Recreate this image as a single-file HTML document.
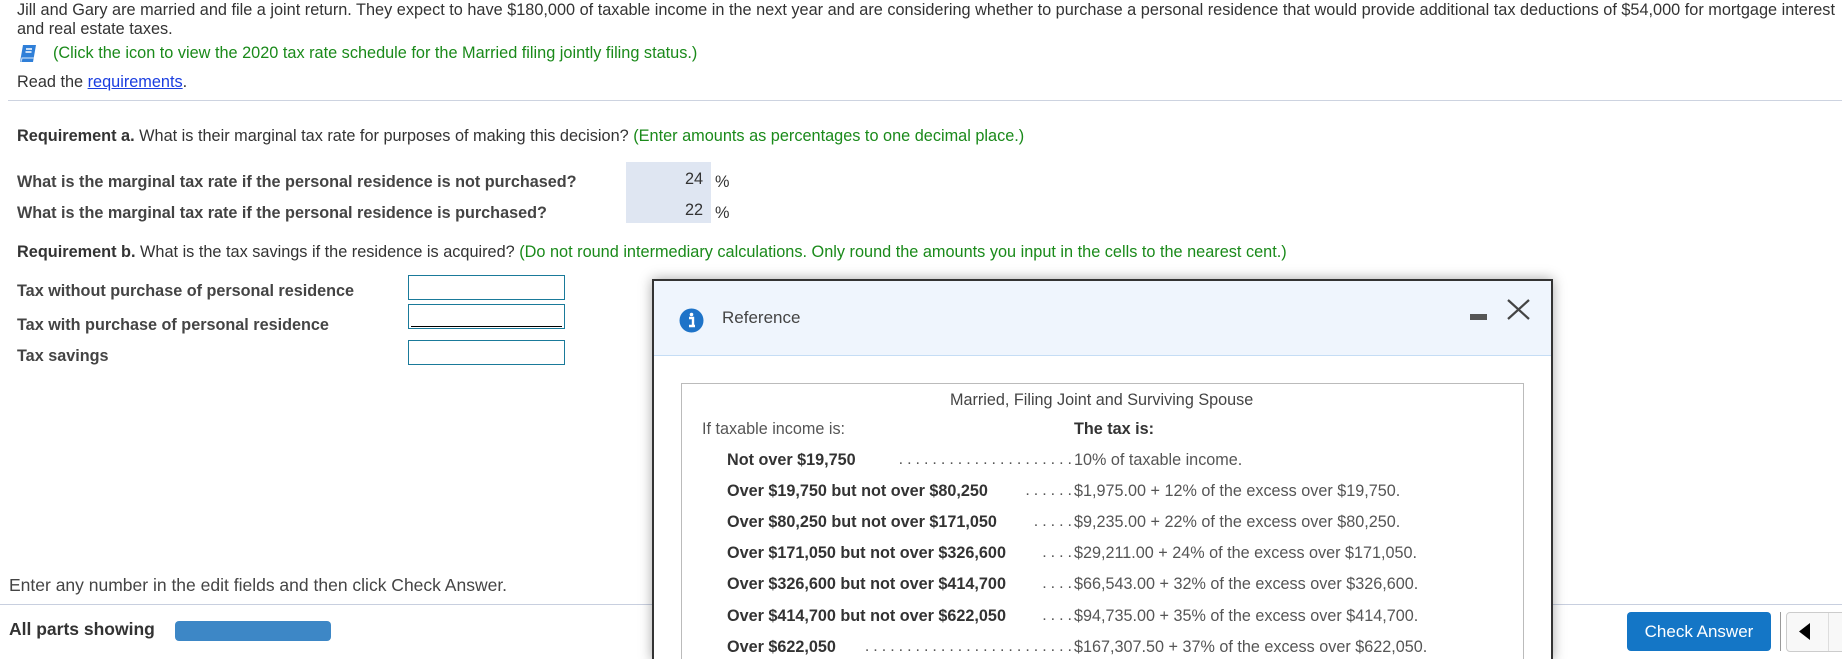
<!DOCTYPE html>
<html><head><meta charset="utf-8"><style>
*{margin:0;padding:0;box-sizing:border-box}
html{width:1842px;height:659px;overflow:hidden}
body{width:1842px;height:659px;overflow:hidden;background:#fff;font-family:"Liberation Sans",Arial,sans-serif;color:#333;position:relative}
.a{position:absolute;white-space:nowrap}
.t{font-size:16.3px;color:#333}
.g{color:#1a8a1a}
.b{font-weight:bold}
.q{font-size:16.2px;font-weight:bold;color:#444}
.inp{position:absolute;left:408px;width:157px;height:25px;border:1px solid #1a7a9a;background:#fff}
.row{position:absolute;left:727px;font-size:16.2px;white-space:nowrap;color:#333;font-weight:bold}
.dots{position:absolute;right:766px;white-space:nowrap;color:#555;font-size:16px;letter-spacing:4px;text-align:right}
.val{position:absolute;left:1074px;font-size:16.2px;color:#555;white-space:nowrap}
</style></head><body>
<div class="a t" style="left:17px;top:1px;line-height:19px;white-space:normal;width:1825px">Jill and Gary are married and file a joint return. They expect to have $180,000 of taxable income in the next year and are considering whether to purchase a personal residence that would provide additional tax deductions of $54,000 for mortgage interest and real estate taxes.</div>
<svg class="a" style="left:19px;top:44px" width="18" height="19" viewBox="0 0 18 19"><path d="M4 1h13l-3 17H1z" fill="#2f7fd8"/><path d="M2 18l1-4h12" stroke="#bcd6f5" stroke-width="1.2" fill="none"/><path d="M7 5h6M6.5 8h6" stroke="#fff" stroke-width="1.6"/></svg>
<div class="a t g" style="left:53px;top:44px">(Click the icon to view the 2020 tax rate schedule for the Married filing jointly filing status.)</div>
<div class="a t" style="left:17px;top:73px">Read the <span style="color:#1a3de0;text-decoration:underline">requirements</span>.</div>
<div class="a" style="left:8px;top:100px;width:1834px;height:1px;background:#cdd3e0"></div>
<div class="a t" style="left:17px;top:127px"><span class="b">Requirement a.</span> What is their marginal tax rate for purposes of making this decision? <span class="g">(Enter amounts as percentages to one decimal place.)</span></div>
<div class="a q" style="left:17px;top:173px">What is the marginal tax rate if the personal residence is not purchased?</div>
<div class="a q" style="left:17px;top:204px">What is the marginal tax rate if the personal residence is purchased?</div>
<div class="a" style="left:626px;top:162px;width:85px;height:61px;background:#dfe6f2"></div>
<div class="a t" style="left:685px;top:170px">24</div><div class="a t" style="left:715px;top:173px">%</div>
<div class="a t" style="left:685px;top:201px">22</div><div class="a t" style="left:715px;top:204px">%</div>
<div class="a t" style="left:17px;top:243px"><span class="b">Requirement b.</span> What is the tax savings if the residence is acquired? <span class="g">(Do not round intermediary calculations. Only round the amounts you input in the cells to the nearest cent.)</span></div>
<div class="a q" style="left:17px;top:282px">Tax without purchase of personal residence</div>
<div class="a q" style="left:17px;top:316px">Tax with purchase of personal residence</div>
<div class="a q" style="left:17px;top:347px">Tax savings</div>
<div class="inp" style="top:275px"></div>
<div class="inp" style="top:304px"><div style="position:absolute;left:2px;right:2px;top:21px;height:1px;background:#000"></div></div>
<div class="inp" style="top:340px"></div>
<div class="a" style="left:9px;top:575px;font-size:17.5px;color:#444">Enter any number in the edit fields and then click Check Answer.</div>
<div class="a" style="left:0;top:604px;width:1842px;height:1px;background:#c8cfdf"></div>
<div class="a b" style="left:9px;top:619px;font-size:17.5px;color:#333">All parts showing</div>
<div class="a" style="left:175px;top:621px;width:156px;height:20px;background:#3d87c6;border-radius:4px"></div>
<div class="a" style="left:1627px;top:612px;width:144px;height:39px;background:#1476c6;border-radius:4px;color:#fff;font-size:17px;text-align:center;line-height:39px">Check Answer</div>
<div class="a" style="left:1780px;top:612px;width:1px;height:39px;background:#999"></div>
<div class="a" style="left:1786px;top:612px;width:60px;height:40px;border:1px solid #ccc;border-radius:4px;background:#f8f8f8"></div>
<div class="a" style="left:1828px;top:613px;width:1px;height:38px;background:#ddd"></div>
<svg class="a" style="left:1799px;top:623px" width="12" height="17"><path d="M11 0v17L0 8.5z" fill="#000"/></svg>
<div class="a" style="left:652px;top:279px;width:901px;height:382px;border:2px solid #333;border-bottom:none;background:#fff;box-shadow:0 0 12px rgba(0,0,0,.35)">
 <div style="position:absolute;left:0;top:0;right:0;height:75px;background:#eff5fd;border-bottom:1px solid #c5ddf5"></div>
 <svg style="position:absolute;left:25px;top:27px" width="25" height="25"><circle cx="12.5" cy="12.5" r="12" fill="#1e73c8"/><path d="M10 10h4v8h2M10 18h6" stroke="#fff" stroke-width="2.4" fill="none"/><circle cx="12.5" cy="6.5" r="1.8" fill="#fff"/></svg>
 <div style="position:absolute;left:68px;top:27px;font-size:17px;color:#444">Reference</div>
 <div style="position:absolute;left:816px;top:33px;width:17px;height:6px;background:#555"></div>
 <svg style="position:absolute;left:853px;top:18px" width="23" height="21"><path d="M1 1l21 19M22 1L1 20" stroke="#444" stroke-width="2.2"/></svg>
 <div style="position:absolute;left:27px;top:102px;width:843px;height:300px;border:1px solid #bbb"></div>
</div>
<div class="a" style="left:950px;top:391px;font-size:16.2px;color:#444">Married, Filing Joint and Surviving Spouse</div>
<div class="a" style="left:702px;top:420px;font-size:16.2px;color:#555">If taxable income is:</div>
<div class="a b" style="left:1074px;top:420px;font-size:16.2px;color:#333">The tax is:</div>
<div class="row" style="top:451px">Not over $19,750</div>
<div class="row" style="top:482px">Over $19,750 but not over $80,250</div>
<div class="row" style="top:513px">Over $80,250 but not over $171,050</div>
<div class="row" style="top:544px">Over $171,050 but not over $326,600</div>
<div class="row" style="top:575px">Over $326,600 but not over $414,700</div>
<div class="row" style="top:607px">Over $414,700 but not over $622,050</div>
<div class="row" style="top:638px">Over $622,050</div>
<div class="dots" style="top:451px">.....................</div>
<div class="dots" style="top:482px">......</div>
<div class="dots" style="top:513px">.....</div>
<div class="dots" style="top:544px">....</div>
<div class="dots" style="top:575px">....</div>
<div class="dots" style="top:607px">....</div>
<div class="dots" style="top:638px">.........................</div>
<div class="val" style="top:451px">10% of taxable income.</div>
<div class="val" style="top:482px">$1,975.00 + 12% of the excess over $19,750.</div>
<div class="val" style="top:513px">$9,235.00 + 22% of the excess over $80,250.</div>
<div class="val" style="top:544px">$29,211.00 + 24% of the excess over $171,050.</div>
<div class="val" style="top:575px">$66,543.00 + 32% of the excess over $326,600.</div>
<div class="val" style="top:607px">$94,735.00 + 35% of the excess over $414,700.</div>
<div class="val" style="top:638px">$167,307.50 + 37% of the excess over $622,050.</div>
</body></html>
